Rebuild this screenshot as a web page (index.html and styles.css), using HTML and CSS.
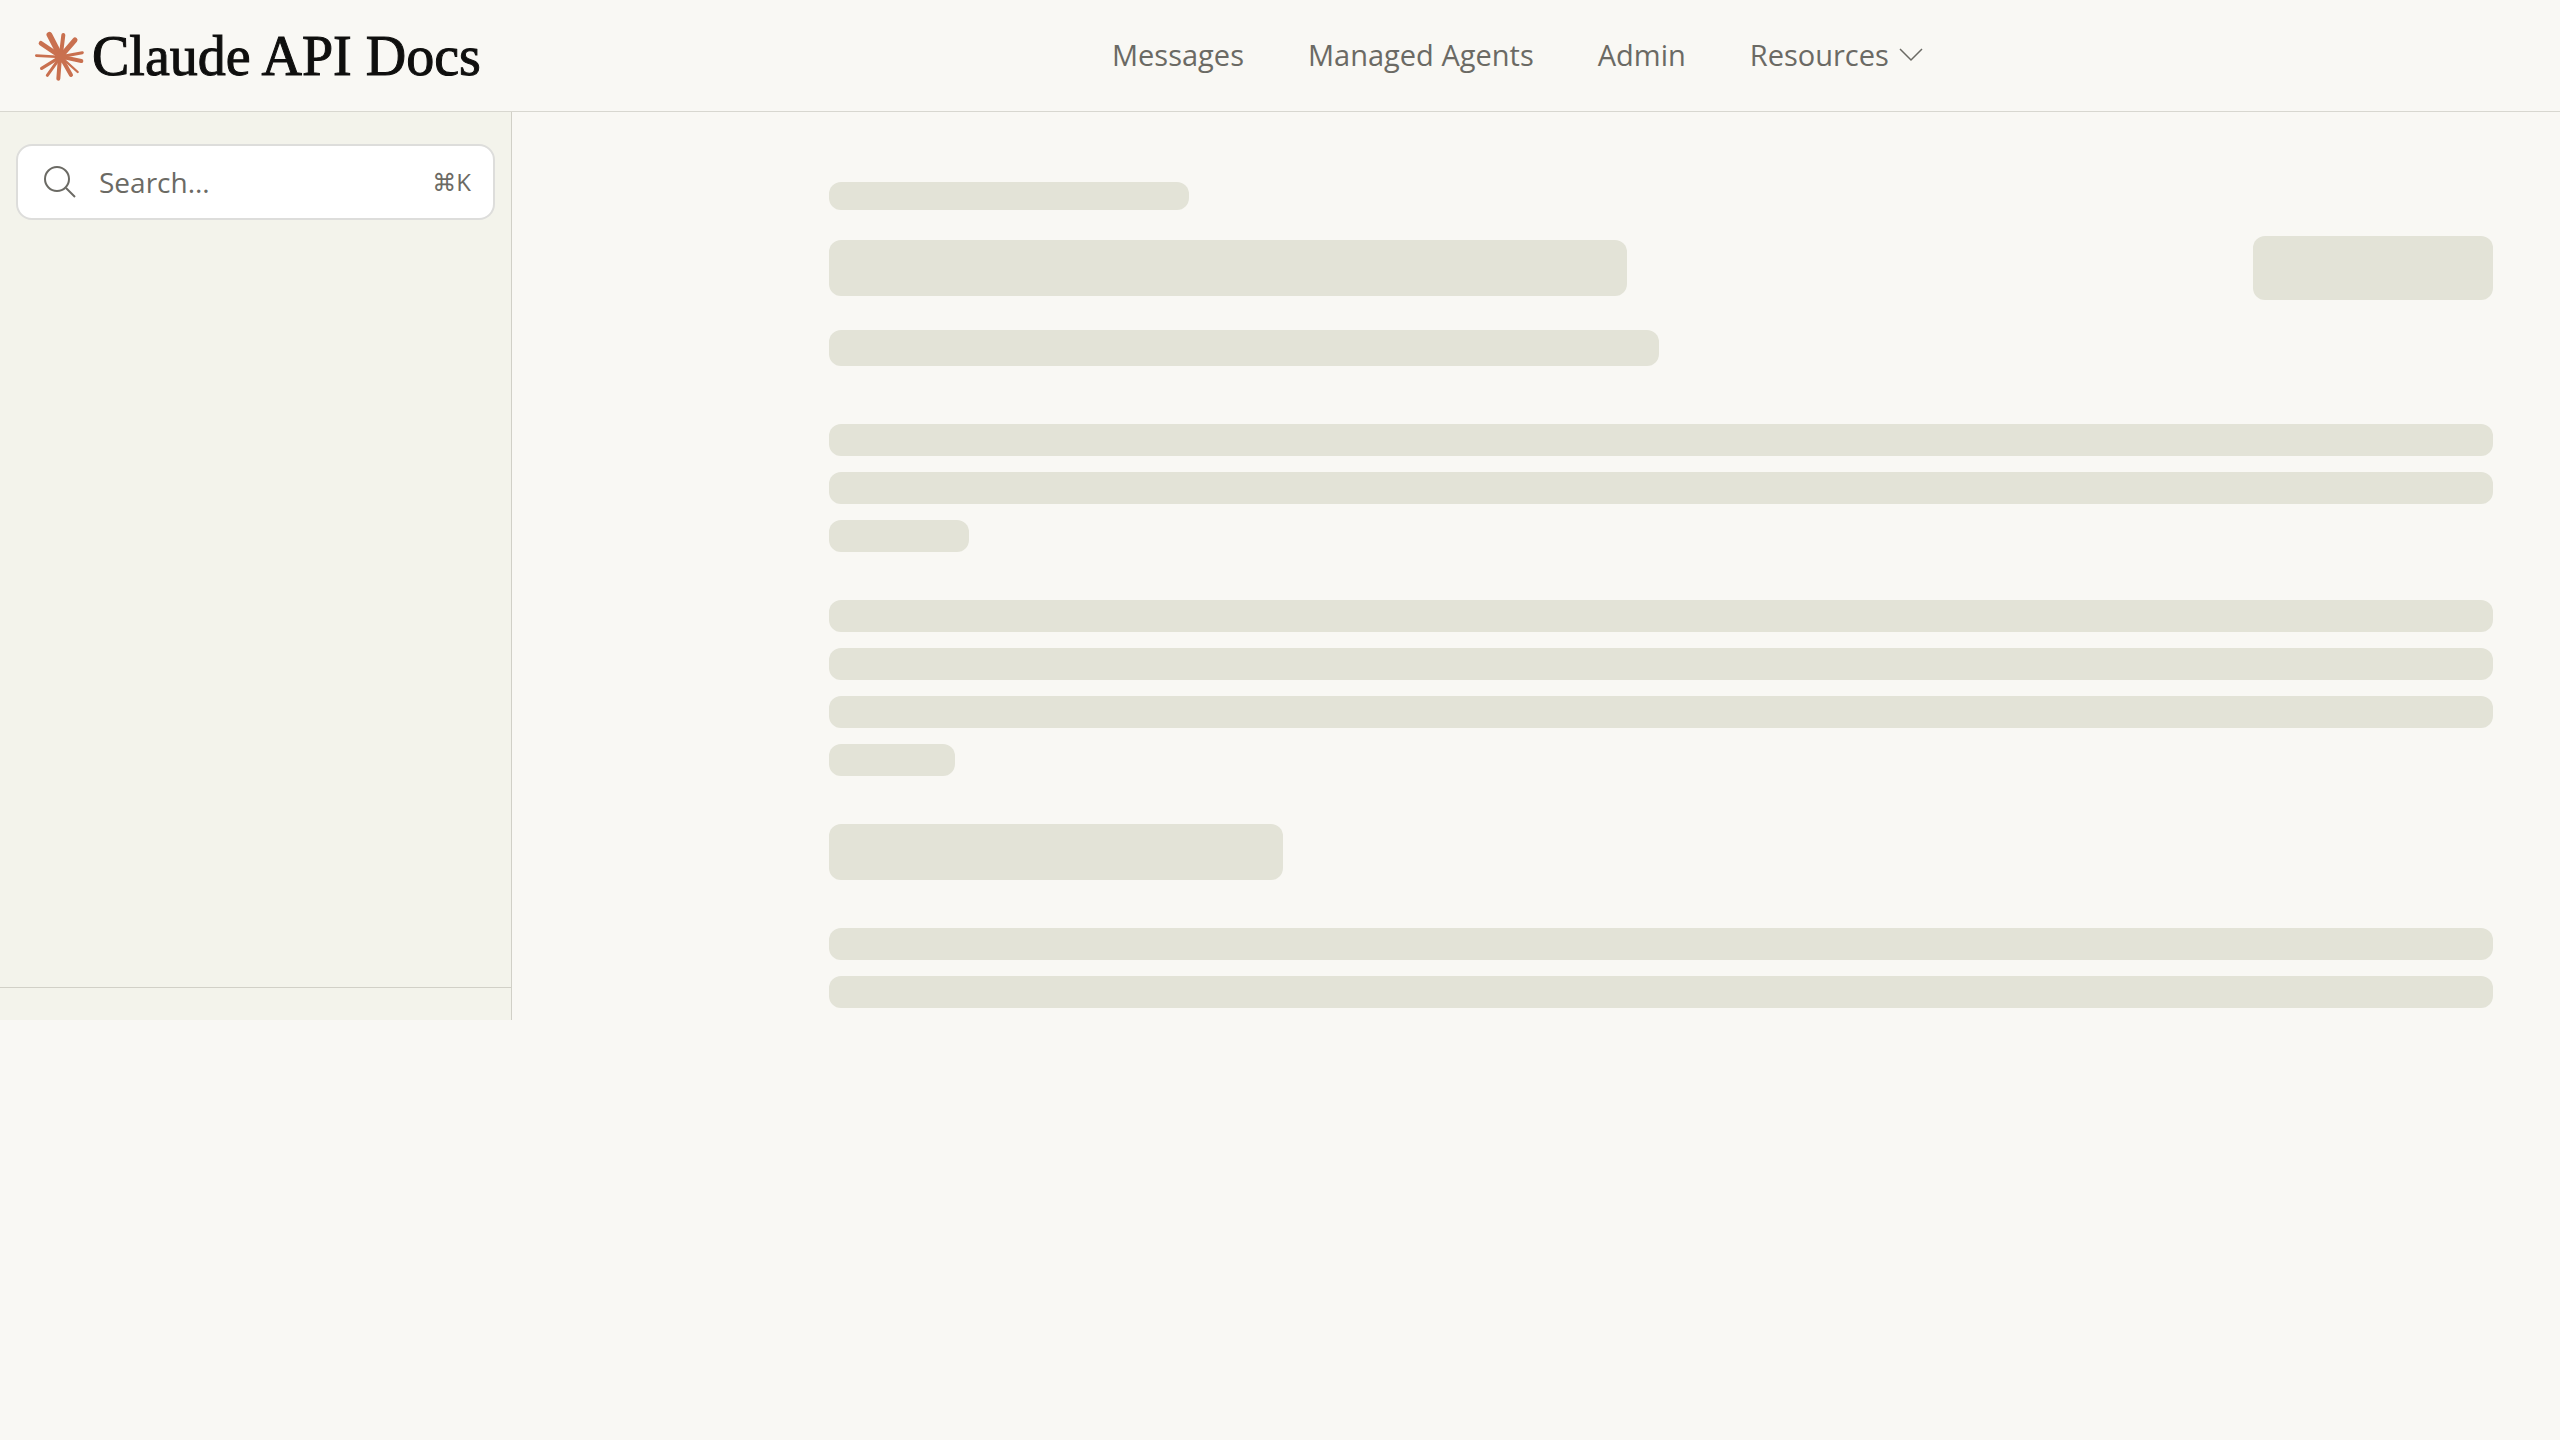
FILE: index.html
```
<!DOCTYPE html>
<html lang="en">
<head>
  <meta charset="UTF-8">
  <meta name="viewport" content="width=device-width, initial-scale=1">
  <title>Claude API Docs</title>
  <link rel="stylesheet" href="styles.css">
</head>
<body>
  <header class="header">
    <a class="logo" href="#">
      <svg class="logo-mark" viewBox="45 45 147 150" aria-hidden="true">
        <g stroke="currentColor" stroke-linecap="round">
          <path stroke-width="17" d="M122 122L88 56"/>
          <path stroke-width="12" d="M122 122L130 57"/>
          <path stroke-width="15" d="M122 122L165 72"/>
          <path stroke-width="9" d="M122 122L187 110"/>
          <path stroke-width="12" d="M122 122L184 135"/>
          <path stroke-width="7" d="M122 122L173 168"/>
          <path stroke-width="12" d="M122 122L153 177"/>
          <path stroke-width="12" d="M120 122L115 188"/>
          <path stroke-width="9" d="M122 122L82 178"/>
          <path stroke-width="10" d="M122 122L65 157"/>
          <path stroke-width="8" d="M122 123L49 119"/>
          <path stroke-width="14" d="M122 122L63 82"/>
        </g>
        <circle cx="122" cy="123" r="17" fill="currentColor"/>
      </svg>
      <span class="logo-text">Claude API Docs</span>
    </a>
    <nav class="nav">
      <a href="#">Messages</a>
      <a href="#">Managed Agents</a>
      <a href="#">Admin</a>
      <button type="button" class="nav-menu">
        Resources
        <svg class="chevron" viewBox="0 0 24 14" aria-hidden="true"><path d="M1 1l11 11L23 1"/></svg>
      </button>
    </nav>
  </header>

  <div class="layout">
    <aside class="sidebar">
      <button type="button" class="search">
        <svg class="search-icon" viewBox="0 0 34 34" aria-hidden="true"><circle cx="14" cy="14" r="12"/><path d="M23 23l9 9"/></svg>
        <span class="search-label">Search...</span>
        <kbd>⌘K</kbd>
      </button>
      <div class="sidebar-footer"></div>
    </aside>

    <main class="content" aria-busy="true">
      <div class="bone crumb"></div>
      <div class="title-row">
        <div class="bone title"></div>
        <div class="bone action"></div>
      </div>
      <div class="bone subtitle"></div>
      <div class="paragraph">
        <div class="bone"></div>
        <div class="bone"></div>
        <div class="bone last-a"></div>
      </div>
      <div class="paragraph">
        <div class="bone"></div>
        <div class="bone"></div>
        <div class="bone"></div>
        <div class="bone last-b"></div>
      </div>
      <div class="bone heading"></div>
      <div class="paragraph">
        <div class="bone"></div>
        <div class="bone"></div>
      </div>
    </main>
  </div>
</body>
</html>
```
FILE: styles.css
```
* { box-sizing: border-box; }

body {
  margin: 0;
  background: #f9f8f4;
  color: #6b6a64;
  font-family: "Open Sans", "Noto Sans", sans-serif;
  font-size: 28px;
  line-height: 38px;
}

a { color: inherit; text-decoration: none; }

button {
  font: inherit;
  color: inherit;
  cursor: pointer;
}

svg { fill: none; flex-shrink: 0; }

/* Header */
.header {
  display: flex;
  align-items: center;
  height: 112px;
  padding-left: 35px;
  border-bottom: 1px solid #d8d7d0;
}

.logo {
  display: flex;
  align-items: center;
  gap: 8px;
}

.logo-mark { width: 49px; height: 50px; color: #c9704f; }

.logo-text {
  font-family: "Liberation Serif", serif;
  font-size: 56px;
  line-height: 64px;
  color: #0f0f0e;
  white-space: nowrap;
  -webkit-text-stroke: 1px #0f0f0e;
}

.nav {
  flex: 1;
  display: flex;
  justify-content: center;
  gap: 64px;
  padding: 0 6px 2px 0;
  font-size: 29px;
}

.nav a:hover, .nav-menu:hover { color: #0f0f0e; }

.nav-menu {
  display: flex;
  align-items: center;
  gap: 10px;
  padding: 0;
  border: 0;
  background: none;
}

.chevron { width: 24px; height: 14px; stroke: currentColor; stroke-width: 1.5; }

/* Sidebar */
.layout { display: flex; }

.sidebar {
  display: flex;
  flex-direction: column;
  justify-content: space-between;
  width: 512px;
  flex-shrink: 0;
  background: #f3f3eb;
  border-right: 1px solid #d1d0c7;
}

.search {
  display: flex;
  align-items: center;
  margin: 32px 16px 0;
  padding: 18px 22px 18px 25px;
  border: 2px solid #dddddb;
  border-radius: 16px;
  background: #fff;
  text-align: left;
}

.search-icon { width: 34px; height: 34px; stroke: currentColor; stroke-width: 2; }

.search-label { flex: 1; margin-left: 22px; line-height: 36px; }

kbd {
  font-family: "Open Sans", "DejaVu Sans", sans-serif;
  font-size: 24px;
  line-height: 36px;
}

.sidebar-footer { height: 33px; border-top: 1px solid #d1d0c7; }

/* Loading skeleton */
.content {
  flex: 1;
  padding: 70px 67px 12px 317px;
}

.bone {
  height: 32px;
  border-radius: 12px;
  background: #e3e3d7;
}

.crumb { width: 360px; height: 28px; }

.title-row {
  display: flex;
  align-items: center;
  justify-content: space-between;
  margin: 26px 0 30px;
}

.title { width: 798px; height: 56px; }
.action { width: 240px; height: 64px; }
.subtitle { width: 830px; height: 36px; margin-bottom: 58px; }

.paragraph {
  display: flex;
  flex-direction: column;
  gap: 16px;
}

.paragraph + .paragraph,
.heading,
.heading + .paragraph { margin-top: 48px; }

.last-a { width: 140px; }
.last-b { width: 126px; }
.heading { width: 454px; height: 56px; }
```
